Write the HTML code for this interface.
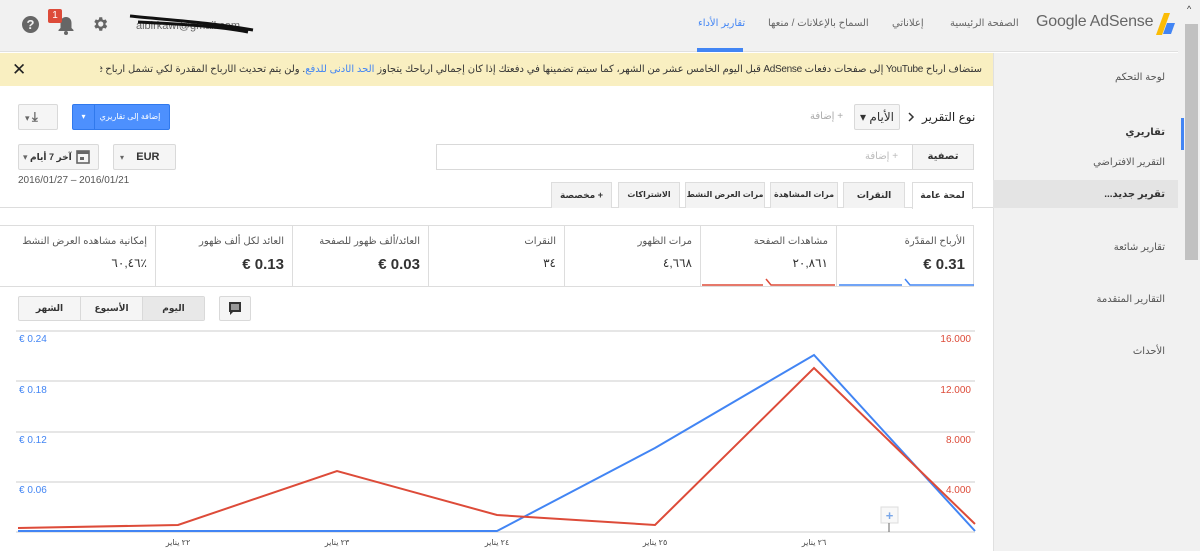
<!DOCTYPE html>
<html><head><meta charset="utf-8"><style>
*{box-sizing:border-box;margin:0;padding:0}
body{width:1200px;height:551px;overflow:hidden;background:#fff;font-family:"Liberation Sans","DejaVu Sans",sans-serif;font-size:11px;color:#333;position:relative}
.a{position:absolute;white-space:nowrap}
.btn{position:absolute;border:1px solid #d9d9d9;background:#f5f5f5;border-radius:2px;white-space:nowrap;overflow:hidden}
.rtl{direction:rtl}
.tab{position:absolute;top:182px;height:26px;border:1px solid #ddd;border-bottom:none;background:#f3f3f3;font-size:9px;font-weight:bold;text-align:center;line-height:24px;color:#333;white-space:nowrap;overflow:hidden}
.card{position:absolute;top:225px;height:62px;border:1px solid #ddd;border-right:none;text-align:right;padding:10px 8px;white-space:nowrap;overflow:hidden}
.card .t{font-size:10px;color:#555}
.card .v{font-size:15px;font-weight:bold;margin-top:9px;color:#333}
.sb{position:absolute;right:35px;font-size:10px;color:#555;text-align:right;white-space:nowrap}
</style></head><body>
<div class="a" style="left:0;top:0;width:1183px;height:52px;background:#f1f1f1;border-bottom:1px solid #e0e0e0"></div>
<div class="a" style="left:22px;top:16px;width:17px;height:17px;border-radius:50%;background:#666;color:#f1f1f1;font-weight:bold;font-size:13px;text-align:center;line-height:17px">?</div>
<svg class="a" style="left:56px;top:14px" width="20" height="22" viewBox="0 0 20 22"><path d="M10 3c-3.5 0-5.5 2.5-5.5 6v5l-2 2v1h15v-1l-2-2V9c0-3.5-2-6-5.5-6z" fill="#666"/><circle cx="10" cy="19" r="2" fill="#666"/></svg>
<div class="a" style="left:48px;top:9px;width:14px;height:14px;background:#dd4b39;color:#fff;font-size:10px;text-align:center;line-height:14px;border-radius:2px">1</div>
<svg class="a" style="left:91px;top:15px" width="18" height="18" viewBox="0 0 24 24"><path fill="#666" d="M19.4 13a7.5 7.5 0 000-2l2.1-1.6-2-3.5-2.5 1a7 7 0 00-1.7-1L15 3h-4l-.4 2.9a7 7 0 00-1.7 1l-2.5-1-2 3.5L6.6 11a7.5 7.5 0 000 2l-2.2 1.6 2 3.5 2.5-1a7 7 0 001.7 1L11 21h4l.4-2.9a7 7 0 001.7-1l2.5 1 2-3.5zM13 15.5a3.5 3.5 0 110-7 3.5 3.5 0 010 7z"/></svg>
<div class="a" style="left:136px;top:20px;font-size:11px;color:#666">albirkawi@gmail.com</div>
<svg class="a" style="left:128px;top:12px" width="130" height="22"><path d="M2 4 C40 8 80 10 125 18 M10 10 C50 12 90 14 120 20" stroke="#111" stroke-width="3" fill="none"/></svg>
<div class="a rtl" style="left:698px;top:18px;font-size:10px;color:#4285f4">تقارير الأداء</div>
<div class="a" style="left:697px;top:48px;width:46px;height:4px;background:#4285f4"></div>
<div class="a rtl" style="left:768px;top:18px;font-size:10px;color:#666">السماح بالإعلانات / منعها</div>
<div class="a rtl" style="left:892px;top:18px;font-size:10px;color:#666">إعلاناتي</div>
<div class="a rtl" style="left:950px;top:18px;font-size:10px;color:#666">الصفحة الرئيسية</div>
<div class="a" style="left:1036px;top:13px;font-size:16px;color:#666;letter-spacing:-0.2px">Google AdSense</div>
<svg class="a" style="left:1155px;top:13px" width="22" height="24"><polygon points="9,0 15,0 7,22 1,22" fill="#fbbc05"/><polygon points="12,10 20,10 16,21 8,21" fill="#4285f4"/></svg>
<div class="a" style="left:1178px;top:0;width:22px;height:551px;background:#f1f1f1"></div>
<div class="a" style="left:1185px;top:24px;width:13px;height:236px;background:#c1c1c1"></div>
<div class="a" style="left:1187px;top:4px;font-size:9px;color:#333">^</div>
<div class="a" style="left:0;top:53px;width:993px;height:33px;background:#f9efc1"></div>
<div class="a" style="left:12px;top:60px;font-size:17px;font-weight:bold;color:#222">✕</div>
<div class="a rtl" style="left:100px;top:64px;width:882px;font-size:10px;letter-spacing:-0.3px;color:#333;white-space:nowrap;text-align:right;overflow:hidden">ستضاف أرباح YouTube إلى صفحات دفعات AdSense قبل اليوم الخامس عشر من الشهر، كما سيتم تضمينها في دفعتك إذا كان إجمالي أرباحك يتجاوز <span style="color:#4285f4">الحد الأدنى للدفع</span>. ولن يتم تحديث الأرباح المقدرة لكي تشمل أرباح YouTube.</div>
<div class="a" style="left:993px;top:53px;width:185px;height:498px;background:#f1f1f1;border-left:1px solid #e0e0e0"></div>
<div class="sb rtl" style="top:72px">لوحة التحكم</div>
<div class="sb rtl" style="top:127px;font-weight:bold;color:#333">تقاريري</div>
<div class="a" style="left:1181px;top:118px;width:3px;height:32px;background:#4285f4"></div>
<div class="sb rtl" style="top:157px">التقرير الافتراضي</div>
<div class="a" style="left:993px;top:180px;width:185px;height:28px;background:#e4e4e4"></div>
<div class="sb rtl" style="top:189px;font-weight:bold;color:#333">تقرير جديد...</div>
<div class="sb rtl" style="top:242px">تقارير شائعة</div>
<div class="sb rtl" style="top:294px">التقارير المتقدمة</div>
<div class="sb rtl" style="top:346px">الأحداث</div>
<div class="a rtl" style="left:922px;top:110px;font-size:12px;color:#222">نوع التقرير</div>
<svg class="a" style="left:907px;top:112px" width="8" height="10"><path d="M2 1l4 4-4 4" fill="none" stroke="#333" stroke-width="1.5"/></svg>
<div class="btn rtl" style="left:854px;top:104px;width:46px;height:26px;background:#f5f5f5;font-size:12px;line-height:24px;padding-right:5px">الأيام ▾</div>
<div class="a rtl" style="left:810px;top:111px;font-size:10px;color:#aaa">+ إضافة</div>
<div class="btn" style="left:18px;top:104px;width:40px;height:26px;font-size:9px;color:#666;line-height:24px;padding-left:6px">▾ <b style="font-size:13px">⤓</b></div>
<div class="a" style="left:72px;top:104px;width:98px;height:26px;background:#4d90fe;border:1px solid #3079ed;border-radius:2px;color:#fff;font-size:8px;line-height:24px;overflow:hidden"><span style="display:inline-block;width:22px;text-align:center;border-right:1px solid #3079ed">▾</span><span class="rtl" style="display:inline-block;width:70px;text-align:center">إضافة إلى تقاريري</span></div>
<div class="btn" style="left:18px;top:144px;width:81px;height:26px;font-size:9px;font-weight:bold;line-height:24px;padding-left:4px"><span style="color:#666">▾</span> <span class="rtl">آخر 7 أيام</span></div>
<svg class="a" style="left:76px;top:149px" width="14" height="15"><rect x="1" y="2" width="12" height="12" fill="#f5f5f5" stroke="#666" stroke-width="1.6"/><rect x="1" y="2" width="12" height="3" fill="#666"/><rect x="4" y="8" width="4" height="3" fill="#666"/></svg>
<div class="btn" style="left:113px;top:144px;width:63px;height:26px;font-size:11px;font-weight:bold;line-height:24px;padding-left:6px"><span style="font-size:8px;color:#666">▾</span> &nbsp;&nbsp;&nbsp;EUR</div>
<div class="a" style="left:18px;top:175px;font-size:10px;color:#555">2016/01/27 – 2016/01/21</div>
<div class="a" style="left:436px;top:144px;width:538px;height:26px;border:1px solid #d9d9d9;background:#fff"></div>
<div class="a rtl" style="left:912px;top:144px;width:62px;height:26px;background:#f5f5f5;border:1px solid #d9d9d9;font-size:10px;font-weight:bold;text-align:center;line-height:24px">تصفية</div>
<div class="a rtl" style="left:865px;top:151px;font-size:10px;color:#bbb">+ إضافة</div>
<div class="a" style="left:0;top:207px;width:993px;height:1px;background:#ddd"></div>
<div class="tab rtl" style="left:912px;width:61px;background:#fff;height:27px">لمحة عامة</div>
<div class="tab rtl" style="left:843px;width:62px">النقرات</div>
<div class="tab rtl" style="left:770px;width:68px;font-size:8px">مرات المشاهدة</div>
<div class="tab rtl" style="left:685px;width:80px;font-size:8px">مرات العرض النشط</div>
<div class="tab rtl" style="left:618px;width:62px;font-size:8px">الاشتراكات</div>
<div class="tab rtl" style="left:551px;width:61px">+ مخصصة</div>
<div class="card rtl" style="left:836px;width:138px;border-right:1px solid #ddd"><div class="t">الأرباح المقدّرة</div><div class="v">0.31 €</div></div>
<div class="card rtl" style="left:700px;width:136px"><div class="t">مشاهدات الصفحة</div><div class="v" style="font-weight:normal;font-size:12px">٢٠,٨٦١</div></div>
<div class="card rtl" style="left:564px;width:136px"><div class="t">مرات الظهور</div><div class="v" style="font-weight:normal;font-size:12px">٤,٦٦٨</div></div>
<div class="card rtl" style="left:428px;width:136px"><div class="t">النقرات</div><div class="v" style="font-weight:normal;font-size:12px">٣٤</div></div>
<div class="card rtl" style="left:292px;width:136px"><div class="t">العائد/ألف ظهور للصفحة</div><div class="v">0.03 €</div></div>
<div class="card rtl" style="left:155px;width:137px"><div class="t">العائد لكل ألف ظهور</div><div class="v">0.13 €</div></div>
<div class="card rtl" style="left:0;width:155px;border-left:none"><div class="t">إمكانية مشاهده العرض النشط</div><div class="v" style="font-weight:normal;font-size:12px">٪٦٠,٤٦</div></div>
<svg class="a" style="left:700px;top:278px" width="275" height="10"><path d="M2 7H63M66 1L71 7H135" fill="none" stroke="#dd4b39" stroke-width="1.5"/><path d="M139 7H202M205 1L210 7H274" fill="none" stroke="#4285f4" stroke-width="1.5"/></svg>
<div class="btn rtl" style="left:18px;top:296px;width:187px;height:25px;font-size:9px;font-weight:bold;display:flex;line-height:23px;padding:0"><div style="width:62px;text-align:center;background:#e8e8e8;border-left:1px solid #d9d9d9">اليوم</div><div style="width:62px;text-align:center;border-left:1px solid #d9d9d9">الأسبوع</div><div style="width:61px;text-align:center">الشهر</div></div>
<div class="btn" style="left:219px;top:296px;width:32px;height:25px"></div>
<svg class="a" style="left:228px;top:301px" width="14" height="15"><path d="M1 1h12v10H5l-3 3v-3H1z" fill="#333"/><path d="M3 4h8M3 6h8M3 8h8" stroke="#fff" stroke-width="1"/></svg>
<svg class="a" style="left:0;top:325px" width="992" height="226">
<g stroke="#e6e6e6" stroke-width="2"><line x1="16" y1="6" x2="975" y2="6"/><line x1="16" y1="56" x2="975" y2="56"/><line x1="16" y1="107" x2="975" y2="107"/><line x1="16" y1="157" x2="975" y2="157"/><line x1="16" y1="207" x2="975" y2="207"/></g>
<g fill="#4285f4" font-size="10" font-family="Liberation Sans"><text x="19" y="17">€ 0.24</text><text x="19" y="68">€ 0.18</text><text x="19" y="118">€ 0.12</text><text x="19" y="168">€ 0.06</text></g>
<g fill="#dd4b39" font-size="10" font-family="Liberation Sans" text-anchor="end"><text x="971" y="17">16.000</text><text x="971" y="68">12.000</text><text x="971" y="118">8.000</text><text x="971" y="168">4.000</text></g>
<polyline points="18,206 497,206 655,123 814,30 975,206" fill="none" stroke="#4285f4" stroke-width="2"/>
<polyline points="18,203 178,200 337,146 497,190 655,200 814,43 975,199" fill="none" stroke="#dd4b39" stroke-width="2"/>
<rect x="881" y="182" width="17" height="16" fill="#f8f8f8" stroke="#ddd"/><text x="889.5" y="195" font-size="13" fill="#7aa7e8" text-anchor="middle" font-weight="bold">+</text>
<line x1="889" y1="198" x2="889" y2="207" stroke="#666"/>
<g font-size="8" fill="#444" font-family="Liberation Sans,DejaVu Sans" text-anchor="middle"><text x="178" y="220">٢٢ يناير</text><text x="337" y="220">٢٣ يناير</text><text x="497" y="220">٢٤ يناير</text><text x="655" y="220">٢٥ يناير</text><text x="814" y="220">٢٦ يناير</text></g>
</svg>
</body></html>
